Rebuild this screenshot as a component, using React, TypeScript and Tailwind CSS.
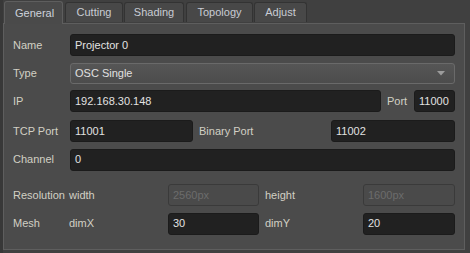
import React from "react";

const font = { fontFamily: '"Liberation Sans", Arial, sans-serif' };

function Input({ value, w, disabled }: { value: string; w?: string; disabled?: boolean }) {
  return (
    <div
      className={`h-[22px] ${w ?? "flex-1"} rounded-[3px] border flex items-center pl-[4px] text-[11px] ${
        disabled
          ? "bg-[#4a4a4a] border-[#3a3a3a] text-[#6c6c6c]"
          : "bg-[#212121] border-[#1b1b1b] text-[#e2e2e2]"
      }`}
    >
      {value}
    </div>
  );
}

function Label({ children, w }: { children: React.ReactNode; w: string }) {
  return <div className={`${w} shrink-0 text-[11px] text-[#d2d0c4]`}>{children}</div>;
}

export default function App() {
  const tabs = ["Cutting", "Shading", "Topology", "Adjust"];
  return (
    <div className="w-[470px] h-[253px] bg-[#404040] flex flex-col border-l-[3px] border-[#383838] overflow-hidden" style={font}>
      <div className="h-[23px] flex items-end pl-[1px]">
        <div className="h-[23px] w-[59px] rounded-t-[3px] border border-b-0 border-[#5e5e5e] bg-[#4a4a4a] flex items-center pl-[10px] text-[11px] text-[#cdd2dc] relative top-[1px] z-10">
          General
        </div>
        <div className="flex gap-[1px] ml-[2px] h-[20px] mb-[1px]">
          {tabs.map((t, i) => (
            <div
              key={t}
              className={`h-[20px] ${["w-[58px]", "w-[60px]", "w-[67px]", "w-[53px]"][i]} ${
                i === 2 ? "ml-[1px]" : ""
              } rounded-t-[3px] border border-b-0 border-[#333333] bg-[#484848] flex items-center justify-center text-[11px] text-[#c8ccd4]`}
            >
              {t}
            </div>
          ))}
        </div>
      </div>
      <div className="w-[462px] h-[227px] border border-[#5e5e5e] bg-[#4b4b4b] pl-[9px] pr-[9px] pt-[10px] flex flex-col">
        <div className="flex items-center h-[22px]">
          <Label w="w-[57px]">Name</Label>
          <Input value="Projector 0" />
        </div>
        <div className="flex items-center h-[22px] mt-[6px]">
          <Label w="w-[57px]">Type</Label>
          <div className="h-[21px] flex-1 rounded-[3px] border border-[#6a6a6a] bg-gradient-to-b from-[#565656] to-[#4c4c4c] flex items-center justify-between pl-[4px] pr-[9px] text-[11px] text-[#e0e0e0]">
            <span>OSC Single</span>
            <svg width="8" height="5" viewBox="0 0 8 5">
              <path d="M0 0 L8 0 L4 4.5 Z" fill="#9c9c9c" />
            </svg>
          </div>
        </div>
        <div className="flex items-center h-[22px] mt-[6px]">
          <Label w="w-[57px]">IP</Label>
          <Input value="192.168.30.148" w="w-[311px]" />
          <div className="ml-[6px] w-[27px] text-[11px] text-[#d2d0c4]">Port</div>
          <Input value="11000" w="w-[41px]" />
        </div>
        <div className="flex items-center h-[22px] mt-[8px]">
          <Label w="w-[57px]">TCP Port</Label>
          <Input value="11001" w="w-[123px]" />
          <div className="ml-[6px] w-[132px] text-[11px] text-[#d2d0c4]">Binary Port</div>
          <Input value="11002" w="w-[124px]" />
        </div>
        <div className="flex items-center h-[21px] mt-[7px]">
          <Label w="w-[57px]">Channel</Label>
          <Input value="0" />
        </div>
        <div className="flex items-center h-[22px] mt-[14px]">
          <Label w="w-[56px]">Resolution</Label>
          <div className="w-[99px] text-[11px] text-[#d2d0c4]">width</div>
          <Input value="2560px" w="w-[91px]" disabled />
          <div className="ml-[6px] w-[98px] text-[11px] text-[#d2d0c4]">height</div>
          <Input value="1600px" w="w-[92px]" disabled />
        </div>
        <div className="flex items-center h-[21px] mt-[7px]">
          <Label w="w-[56px]">Mesh</Label>
          <div className="w-[99px] text-[11px] text-[#d2d0c4]">dimX</div>
          <Input value="30" w="w-[91px]" />
          <div className="ml-[6px] w-[98px] text-[11px] text-[#d2d0c4]">dimY</div>
          <Input value="20" w="w-[92px]" />
        </div>
      </div>
    </div>
  );
}
